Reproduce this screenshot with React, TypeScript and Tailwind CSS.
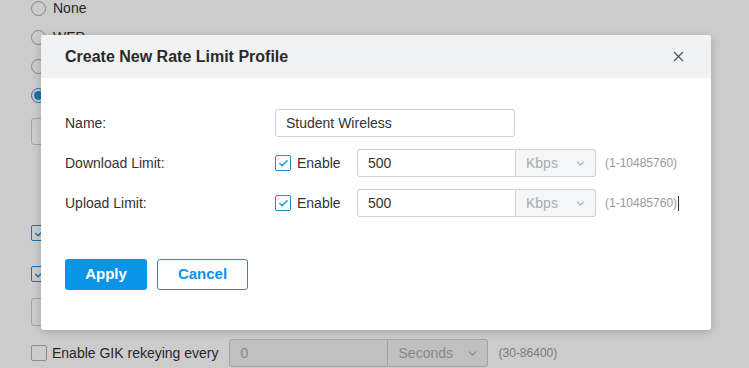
import { Check, ChevronDown, X } from "lucide-react";

const font = "font-['Liberation_Sans',Arial,sans-serif]";

function Radio({ label, checked }: { label?: string; checked?: boolean }) {
  return (
    <div className="flex items-center h-[29px] gap-[7px]">
      <span
        className={`w-[15px] h-[15px] rounded-full border bg-white flex items-center justify-center ${
          checked ? "border-[#1a8fdc]" : "border-[#a8a8a8]"
        }`}
      >
        {checked && <span className="w-[9px] h-[9px] rounded-full bg-[#1a8fdc]" />}
      </span>
      {label && <span className="text-[14px] text-[#333]">{label}</span>}
    </div>
  );
}

function Box({ checked }: { checked?: boolean }) {
  return (
    <span
      className={`w-[16px] h-[16px] rounded-[2px] border bg-white flex items-center justify-center shrink-0 ${
        checked ? "border-[#1a8fdc]" : "border-[#b0b0b0]"
      }`}
    >
      {checked && <Check className="w-[11px] h-[11px] text-[#1a8fdc]" strokeWidth={3} />}
    </span>
  );
}

function LimitRow({ label, cursor }: { label: string; cursor?: boolean }) {
  return (
    <div className="flex items-center h-[28px]">
      <div className="w-[210px] text-[14px] text-[#333]">{label}</div>
      <div className="w-[82px] flex items-center gap-[6px]">
        <Box checked />
        <span className="text-[14px] text-[#333]">Enable</span>
      </div>
      <div className="flex h-[28px]">
        <div className="w-[159px] border border-[#d0d0d0] rounded-l-[3px] px-[10px] flex items-center text-[14px] text-[#333]">
          500
        </div>
        <div className="w-[80px] border border-l-0 border-[#d0d0d0] rounded-r-[3px] bg-[#f5f6f7] pl-[10px] pr-[8px] flex items-center justify-between text-[14px] text-[#aaa]">
          Kbps
          <ChevronDown className="w-[13px] h-[13px] text-[#aaa]" />
        </div>
      </div>
      <span className="ml-[9px] text-[12px] text-[#999] flex items-center">
        (1-10485760)
        {cursor && <span className="ml-[1px] w-px h-[15px] bg-[#333]" />}
      </span>
    </div>
  );
}

export default function App() {
  return (
    <div className={`relative w-[749px] h-[368px] overflow-hidden bg-white ${font}`}>
      {/* page under the dialog */}
      <div className="pl-[31px] -mt-[6px]">
        <Radio label="None" />
        <Radio label="WEP" />
        <Radio label="WPA" />
        <Radio label="WPA2" checked />
        <div className="mt-[8px] w-[300px] h-[27px] border border-[#ccc] rounded-[3px]" />
        <div className="mt-[80px] h-[16px] flex items-center">
          <Box checked />
        </div>
        <div className="mt-[25px] h-[16px] flex items-center">
          <Box checked />
        </div>
        <div className="mt-[16px] w-[300px] h-[28px] border border-[#ccc] rounded-[3px]" />
        <div className="mt-[13px] flex items-center h-[28px]">
          <Box />
          <span className="ml-[5px] text-[14px] text-[#333]">Enable GIK rekeying every</span>
          <div className="ml-[10px] flex h-[28px]">
            <div className="w-[159px] border border-[#ccc] rounded-l-[3px] bg-[#f0f0f0] px-[11px] flex items-center text-[14px] text-[#aaa]">
              0
            </div>
            <div className="w-[100px] border border-l-0 border-[#ccc] rounded-r-[3px] bg-[#f0f0f0] pl-[11px] pr-[8px] flex items-center justify-between text-[14px] text-[#aaa]">
              Seconds
              <ChevronDown className="w-[13px] h-[13px] text-[#aaa]" />
            </div>
          </div>
          <span className="ml-[11px] text-[12px] text-[#999]">(30-86400)</span>
        </div>
      </div>

      {/* mask */}
      <div className="absolute inset-0 bg-black/20" />

      {/* dialog */}
      <div className="absolute left-[41px] top-[35px] w-[670px] h-[295px] bg-white rounded-[3px] shadow-[0_2px_10px_rgba(0,0,0,0.2)] flex flex-col">
        <div className="h-[43px] bg-[#f1f2f4] rounded-t-[3px] px-6 flex items-center justify-between">
          <h2 className="text-[16px] font-bold text-[#2a2a2a]">Create New Rate Limit Profile</h2>
          <X className="w-[17px] h-[17px] text-[#4a4f57]" strokeWidth={1.6} />
        </div>
        <div className="px-6 pt-[31px] flex flex-col gap-[12px]">
          <div className="flex items-center h-[28px]">
            <div className="w-[210px] text-[14px] text-[#333]">Name:</div>
            <div className="w-[240px] h-[28px] border border-[#d0d0d0] rounded-[3px] px-[10px] flex items-center text-[14px] text-[#333]">
              Student Wireless
            </div>
          </div>
          <LimitRow label="Download Limit:" />
          <LimitRow label="Upload Limit:" cursor />
        </div>
        <div className="px-6 mt-[42px] flex gap-[10px]">
          <button className="w-[82px] h-[31px] rounded-[3px] bg-[#0a94e8] text-white text-[15px] font-bold">
            Apply
          </button>
          <button className="w-[91px] h-[31px] rounded-[3px] border border-[#0a94e8] bg-white text-[#0a94e8] text-[15px] font-bold">
            Cancel
          </button>
        </div>
      </div>
    </div>
  );
}
